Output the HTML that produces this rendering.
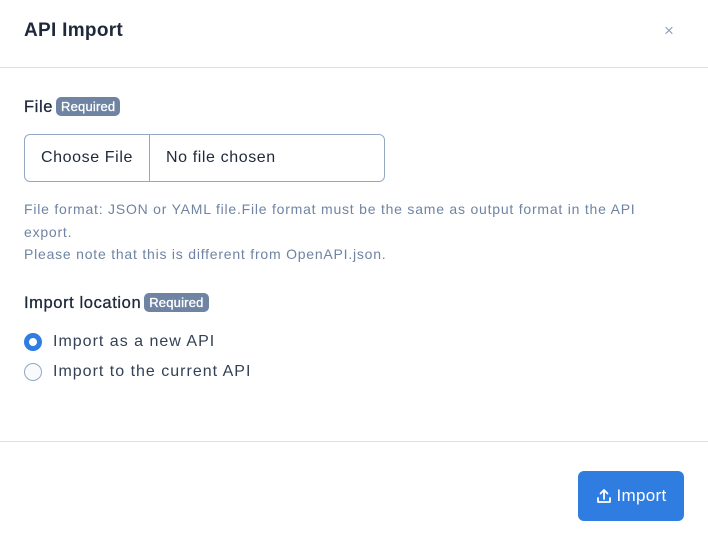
<!DOCTYPE html>
<html><head><style>
*{box-sizing:border-box;margin:0;padding:0}
body{width:708px;height:546px;background:#fff;font-family:"Liberation Sans",sans-serif;color:#1e293b;position:relative;overflow:hidden}
.abs{position:absolute}
.title{left:24px;top:20px;font-size:19px;font-weight:bold;color:#1e293b;letter-spacing:.3px}
.close{left:664px;top:21px;font-size:17px;color:#94a3b8}
.hr{left:0;width:708px;height:1px;background:#dbe1ea}
.lbl{font-size:16.5px;color:#1e293b;letter-spacing:.6px;-webkit-text-stroke:.3px #1e293b}
.badge{display:inline-block;background:#6f84a2;color:#fff;font-size:13px;border-radius:5px;padding:2px 5px;vertical-align:1px;margin-left:3px;letter-spacing:.2px;-webkit-text-stroke:.3px #fff}
.file{left:24px;top:134px;width:361px;height:48px;border:1px solid #94a8c4;border-radius:6px;display:flex;font-size:16px;letter-spacing:.6px}
.file .b{width:125px;border-right:1px solid #94a8c4;display:flex;align-items:center;justify-content:center;color:#1e293b}
.file .t{padding-left:16px;display:flex;align-items:center}
.help{left:24px;top:198px;font-size:14px;color:#6f84a2;line-height:22.5px;width:680px;letter-spacing:.78px;white-space:nowrap}
.radio{left:24px;font-size:16px;display:flex;align-items:center;color:#334155;letter-spacing:1px}
.dot{width:18px;height:18px;border-radius:50%;margin-right:11px}
.btn{left:578px;top:471px;width:106px;height:50px;background:#2f7de1;border-radius:6px;color:#fff;font-size:17px;display:flex;align-items:center;justify-content:center;gap:5px;letter-spacing:.3px}
</style></head><body>
<div class="abs title">API Import</div>
<div class="abs close">×</div>
<div class="abs hr" style="top:67px"></div>
<div class="abs lbl" style="left:24px;top:97px">File<span class="badge">Required</span></div>
<div class="abs file"><div class="b">Choose File</div><div class="t">No file chosen</div></div>
<div class="abs help">File format: JSON or YAML file.File format must be the same as output format in the API<br>export.<br>Please note that this is different from OpenAPI.json.</div>
<div class="abs lbl" style="left:24px;top:293px">Import location<span class="badge">Required</span></div>
<div class="abs radio" style="top:333px"><div class="dot" style="border:5px solid #2f7de1;background:#fff"></div>Import as a new API</div>
<div class="abs radio" style="top:363px"><div class="dot" style="border:1px solid #94a8c4;background:#f8fafc"></div>Import to the current API</div>
<div class="abs hr" style="top:441px"></div>
<div class="abs btn"><svg width="16" height="16" viewBox="0 0 16 16" fill="none" stroke="#fff" stroke-width="1.8" stroke-linecap="round" stroke-linejoin="round"><path d="M8 11V2M4.5 5.5L8 2l3.5 3.5M2 10v4h12v-4"/></svg>Import</div>
</body></html>
